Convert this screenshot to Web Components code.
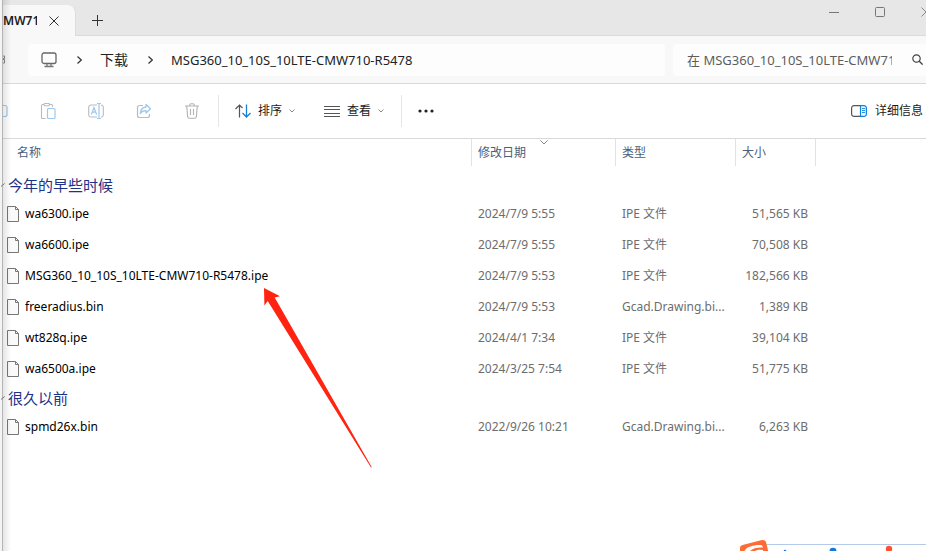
<!DOCTYPE html>
<html lang="zh-CN">
<head>
<meta charset="utf-8">
<title>MSG360_10_10S_10LTE-CMW710-R5478</title>
<style>
  html, body { margin: 0; height: 100%; overflow: hidden; background: #fff; }
  body { font-family: "Noto Sans", "Noto Sans CJK SC", sans-serif; color: #1b1b1b; }
</style>
</head>
<body>
<explorer-window>
  <tab-strip slot="tabs" label="MW71"></tab-strip>
  <address-row slot="address"></address-row>
  <command-bar slot="commands"></command-bar>
  <file-list></file-list>
  <pointer-arrow slot="overlay"></pointer-arrow>
  <ime-bar slot="overlay"></ime-bar>
</explorer-window>

<script>
const RESET = `
  :host, * { box-sizing: border-box; }
  button, input { font: inherit; color: inherit; background: none; border: 0; padding: 0; margin: 0; outline: 0; }
  button { display: flex; align-items: center; justify-content: center; flex: none; white-space: nowrap; }
  svg { display: block; flex: none; overflow: visible; }
`;

class Base extends HTMLElement {
  constructor() {
    super();
    this.attachShadow({ mode: 'open' }).innerHTML =
      `<style>${RESET}${this.constructor.css}</style>${this.constructor.html}`;
  }
}

const ICONS = {
  close: [10, 10, '<path d="M.5.5l9 9M9.500.5l-9 9" stroke="#333"/>'],
  plus: [11, 11, '<path d="M5.500 0v11M0 5.500h11" stroke="#333"/>'],
  min: [10, 10, '<path d="M0 5.500h10" stroke="#777"/>'],
  max: [10, 10, '<rect x=".5" y=".5" width="9" height="9" rx="1" stroke="#777"/>'],
  winclose: [10, 10, '<path d="M.5.5l9 9M9.500.5l-9 9" stroke="#888"/>'],
  pc: [16, 16, '<rect x="1" y="1" width="14" height="10.500" rx="2" stroke="#666" stroke-width="1.300"/><path d="M6 11.500v2.500M10 11.500v2.500M3.500 14.500h9" stroke="#777" stroke-width="1.300"/>'],
  next: [5, 8, '<path d="M.5.5L4.300 4 .5 7.500" stroke="#333" stroke-width="1.200"/>'],
  search: [11, 11, '<circle cx="4.500" cy="4.500" r="3.700" stroke="#444" stroke-width="1.200"/><path d="M7.300 7.300l3.300 3.300" stroke="#444" stroke-width="1.300"/>'],
  refresh: [3, 9, '<path d="M0 1h1.500v2.500H0M0 4.500h1.500V8H0" stroke="#888"/>'],
  copy: [16, 16, '<path d="M2 2.500h10a2 2 0 0 1 2 2v7a2 2 0 0 1-2 2H2" stroke="#9cc9f0" stroke-width="1.200"/>'],
  paste: [16, 16, '<path d="M5.500 15.500h-3a1 1 0 0 1-1-1v-12a1 1 0 0 1 1-1H4M9 1.500h2.500a1 1 0 0 1 1 1V4" stroke="#bbb" stroke-width="1.100"/><rect x="4" y=".5" width="5.500" height="2.200" rx="1" stroke="#bbb" stroke-width="1.100"/><rect x="7.500" y="5.500" width="7.500" height="10" rx="1" stroke="#9cc9f0" stroke-width="1.200"/>'],
  rename: [16, 16, '<path d="M9 2H3a2.300 2.300 0 0 0-2.300 2.300v7.400A2.300 2.300 0 0 0 3 14h6M13 2a2.300 2.300 0 0 1 2.300 2.300v7.400A2.300 2.300 0 0 1 13 14" stroke="#bbb" stroke-width="1.100"/><path d="M3.400 11.500L6 4.500l2.600 7M4.300 9.200h3.400M11 .5v15M9 .5h4M9 15.500h4" stroke="#9cc9f0" stroke-width="1.200"/>'],
  share: [16, 16, '<path d="M7 2.500H3.500a2 2 0 0 0-2 2v8a2 2 0 0 0 2 2h8a2 2 0 0 0 2-2V11" stroke="#bbb" stroke-width="1.200"/><path d="M10 1.500l4.500 4.200L10 10V7.600C7.300 7.500 5.500 8.500 4.300 10.500 4.500 6.500 6.500 4.300 10 4z" stroke="#9cc9f0" stroke-width="1.300" stroke-linejoin="round"/>'],
  trash: [16, 16, '<path d="M1 3h14M5.800 3V2a1.200 1.200 0 0 1 1.200-1.200h2A1.200 1.200 0 0 1 10.200 2v1M2.700 3l1 11a1.500 1.500 0 0 0 1.500 1.300h5.600a1.500 1.500 0 0 0 1.500-1.300l1-11M6.500 6v6M9.500 6v6" stroke="#b3b3b3" stroke-width="1.100"/>'],
  sort: [16, 14, '<path d="M4.500 13.500V1M.5 5l4-4 3 3" stroke="#555" stroke-width="1.200"/><path d="M11.500.5V13M7.500 9l4 4 4-4" stroke="#1480d8" stroke-width="1.300"/>'],
  lines: [16, 11, '<path d="M0 .5h16M0 3.500h16M0 7.500h16M0 10.500h16" stroke="#555"/>'],
  down: [6, 4, '<path d="M.5.5L3 3 5.500.5" stroke="#888"/>'],
  sorted: [8, 5, '<path d="M.5.5L4 4 7.500.5" stroke="#888"/>'],
  dots: [16, 4, '<g fill="#222"><circle cx="2" cy="2" r="1.600"/><circle cx="8" cy="2" r="1.600"/><circle cx="14" cy="2" r="1.600"/></g>'],
  panel: [16, 12, '<path d="M9.500.6H3A2.400 2.400 0 0 0 .6 3v6A2.400 2.400 0 0 0 3 11.400h6.500" stroke="#555" stroke-width="1.200"/><path d="M9.500.6H13A2.400 2.400 0 0 1 15.400 3v6a2.400 2.400 0 0 1-2.400 2.400H9.500z" fill="#eef7fd" stroke="#1480d8" stroke-width="1.200"/><path d="M11 3.500h3M11 5.500h3M11 7.500h3" stroke="#1480d8" stroke-width=".9"/>'],
  file: [12, 16, '<path d="M.5.5h8l3 3v12H.5z" fill="#fafafa" stroke="#777"/><path d="M8.500.5v3h3" stroke="#777"/>'],
  group: [5, 4, '<path d="M0 3.500L3.500.5" stroke="#777"/>'],
};

class UiIcon extends HTMLElement {
  constructor() { super(); this.attachShadow({ mode: 'open' }); }
  connectedCallback() {
    const [w, h, body] = ICONS[this.getAttribute('name')];
    this.shadowRoot.innerHTML = `<style>:host{display:block;flex:none}svg{display:block}</style>
      <svg width="${w}" height="${h}" viewBox="0 0 ${w} ${h}" fill="none" aria-hidden="true">${body}</svg>`;
  }
}
customElements.define('ui-icon', UiIcon);

customElements.define('explorer-window', class extends Base {
  static css = `
    :host { display: flex; position: relative; height: 100%; overflow: hidden; }
    .edge { flex: none; width: 3px; background: #f4f4f4; border-right: 1px solid #b4b4b4; }
    .main { flex: 1; min-width: 0; display: flex; flex-direction: column; position: relative; }
    .shade { position: absolute; inset: 0 auto 0 0; width: 8px; pointer-events: none;
      background: linear-gradient(90deg, rgba(0,0,0,.1), rgba(0,0,0,0)); }
  `;
  static html = `<div class="edge"></div>
    <div class="main"><slot name="tabs"></slot><slot name="address"></slot><slot name="commands"></slot><slot></slot><div class="shade"></div></div>
    <slot name="overlay"></slot>`;
});

customElements.define('tab-strip', class extends Base {
  static css = `
    :host { display: flex; flex: none; height: 36px; background: #e7e7e7; border-bottom: 1px solid #dadada; font-size: 12px; font-weight: 600; }
    .tab { display: flex; align-items: center; width: 73px; margin: 5px 0 -1px; padding-right: 16px;
      justify-content: space-between; background: #f8f8f8; border-radius: 0 8px 0 0; border-right: 1px solid #dcdcdc; }
    .name { width: 34px; overflow: hidden; white-space: nowrap; line-height: 20px; }
    .add { width: 43px; padding-top: 5px; }
    .space { flex: 1; }
    .win { width: 46px; height: 23px; }
    .win:last-child { margin-right: -23px; }
  `;
  static html = `
    <div class="tab"><span class="name"></span><button aria-label="关闭标签页"><ui-icon name="close"></ui-icon></button></div>
    <button class="add" aria-label="新建标签页"><ui-icon name="plus"></ui-icon></button>
    <div class="space"></div>
    <button class="win" aria-label="最小化"><ui-icon name="min"></ui-icon></button>
    <button class="win" aria-label="最大化"><ui-icon name="max"></ui-icon></button>
    <button class="win" aria-label="关闭"><ui-icon name="winclose"></ui-icon></button>`;
  connectedCallback() { this.shadowRoot.querySelector('.name').textContent = this.getAttribute('label'); }
});

customElements.define('address-row', class extends Base {
  static css = `
    :host { display: flex; flex: none; align-items: center; gap: 8px; height: 48px; background: #f8f8f8;
      border-bottom: 1px solid #d9d9d9; font-size: 14px; line-height: 20px; }
    .refresh { width: 17px; justify-content: flex-start; }
    nav { flex: 1; min-width: 0; display: flex; align-items: center; height: 32px; padding-left: 13px; background: #fdfdfd; border-radius: 4px; }
    .sep { width: 5px; margin: 0 18px 0 20px; }
    nav a { color: #222; text-decoration: none; white-space: nowrap; }
    nav a:last-child, input { font-size: 13px; }
    label { flex: none; display: flex; align-items: center; width: 253px; height: 32px; padding-left: 14px; gap: 20px;
      background: #fdfdfd; border-radius: 4px 0 0 4px; }
    input { width: 205px; height: 32px; color: #5d5d5d; }
    input::placeholder { color: #5d5d5d; opacity: 1; }
  `;
  static html = `
    <button class="refresh" aria-label="刷新"><ui-icon name="refresh"></ui-icon></button>
    <nav><ui-icon name="pc"></ui-icon>
      <ui-icon class="sep" name="next"></ui-icon><a href="#downloads">下载</a>
      <ui-icon class="sep" name="next"></ui-icon><a href="#folder">MSG360_10_10S_10LTE-CMW710-R5478</a></nav>
    <label><input type="text" aria-label="搜索" placeholder="在 MSG360_10_10S_10LTE-CMW710"><ui-icon name="search"></ui-icon></label>`;
});

customElements.define('command-bar', class extends Base {
  static css = `
    :host { display: flex; flex: none; align-items: center; height: 55px; background: #fff; border-bottom: 1px solid #d9d9d9;
      font-size: 12px; line-height: 20px; }
    .icon { width: 48px; height: 32px; }
    .first { width: 21px; justify-content: flex-start; overflow: hidden; }
    .first ui-icon { margin-left: -10px; }
    .text { height: 32px; gap: 7px; }
    .view { margin-left: 29px; }
    hr { width: 1px; height: 32px; margin: 0 16px 0 17px; border: 0; background: #e5e5e5; }
    .tight { margin-left: 2px; }
    .space { flex: 1; }
    .details { margin-right: 3px; gap: 8px; }
  `;
  static html = `
    <button class="icon first" aria-label="复制"><ui-icon name="copy"></ui-icon></button>
    <button class="icon" aria-label="粘贴"><ui-icon name="paste"></ui-icon></button>
    <button class="icon" aria-label="重命名"><ui-icon name="rename"></ui-icon></button>
    <button class="icon" aria-label="共享"><ui-icon name="share"></ui-icon></button>
    <button class="icon" aria-label="删除"><ui-icon name="trash"></ui-icon></button>
    <hr class="tight">
    <button class="text"><ui-icon name="sort"></ui-icon><span>排序</span><ui-icon name="down"></ui-icon></button>
    <button class="text view"><ui-icon name="lines"></ui-icon><span>查看</span><ui-icon name="down"></ui-icon></button>
    <hr>
    <button aria-label="更多"><ui-icon name="dots"></ui-icon></button>
    <div class="space"></div>
    <button class="text details"><ui-icon name="panel"></ui-icon><span>详细信息</span></button>`;
});

const GROUPS = [
  ['今年的早些时候', [
    ['wa6300.ipe', '2024/7/9 5:55', 'IPE 文件', '51,565 KB'],
    ['wa6600.ipe', '2024/7/9 5:55', 'IPE 文件', '70,508 KB'],
    ['MSG360_10_10S_10LTE-CMW710-R5478.ipe', '2024/7/9 5:53', 'IPE 文件', '182,566 KB'],
    ['freeradius.bin', '2024/7/9 5:53', 'Gcad.Drawing.bi...', '1,389 KB'],
    ['wt828q.ipe', '2024/4/1 7:34', 'IPE 文件', '39,104 KB'],
    ['wa6500a.ipe', '2024/3/25 7:54', 'IPE 文件', '51,775 KB'],
  ]],
  ['很久以前', [['spmd26x.bin', '2022/9/26 10:21', 'Gcad.Drawing.bi...', '6,263 KB']]],
];

customElements.define('file-list', class extends Base {
  static css = `
    :host { display: block; flex: 1; min-height: 0; padding-right: 110px; background: #fff; font-size: 12px; line-height: 18px; }
    table { width: 100%; table-layout: fixed; border-collapse: separate; border-spacing: 0; }
    .date { width: 144px; } .type { width: 120px; } .size { width: 80px; }
    th, td { padding: 0; text-align: left; font-weight: 400; white-space: nowrap; }
    thead th { height: 27px; border-right: 1px solid #e2e2e2; color: #4c607a; padding-left: 6px; position: relative; }
    thead th:first-child { padding-left: 14px; }
    .mark { position: absolute; top: 1px; left: 50%; margin-left: -4px; }
    .gap td { height: 5px; }
    .group th { height: 27px; }
    .group button { gap: 2px; margin-left: -2px; color: #1e3287; font-size: 15px; line-height: 22px; }
    .file td { height: 31px; padding-left: 6px; color: #6d6d6d; }
    .file td:first-child { padding-left: 4px; color: #000; }
    .file td:last-child { padding: 0 8px 0 0; text-align: right; }
    .name { display: flex; align-items: center; gap: 6px; }
  `;
  static html = `<table>
    <colgroup><col><col class="date"><col class="type"><col class="size"></colgroup>
    <thead><tr><th><button>名称</button></th><th><button>修改日期</button><ui-icon class="mark" name="sorted"></ui-icon></th>
      <th><button>类型</button></th><th><button>大小</button></th></tr></thead>
    <tbody><tr class="gap"><td colspan="4"></td></tr></tbody></table>`;
  connectedCallback() {
    const body = this.shadowRoot.querySelector('tbody');
    for (const [title, files] of GROUPS) {
      body.insertAdjacentHTML('beforeend',
        `<tr class="group"><th colspan="4"><button aria-expanded="true"><ui-icon name="group"></ui-icon><span>${title}</span></button></th></tr>` +
        files.map(([n, d, t, s]) => `<tr class="file"><td><div class="name"><ui-icon name="file"></ui-icon><span>${n}</span></div></td><td>${d}</td><td>${t}</td><td>${s}</td></tr>`).join(''));
    }
  }
});

customElements.define('pointer-arrow', class extends Base {
  static css = `:host { position: absolute; left: 264px; top: 288px; pointer-events: none; }`;
  static html = `<svg width="108" height="180" viewBox="0 0 108 180" aria-hidden="true">
    <path d="M0 0L16 8.300 10.700 9.500 107.800 179.300 107 179.500 3.700 13 .4 17.500z" fill="#ff2412"/></svg>`;
});

customElements.define('ime-bar', class extends Base {
  static css = `:host { position: absolute; right: 0; bottom: 0; pointer-events: none; }`;
  static html = `<svg width="186" height="12" viewBox="0 0 186 12" style="overflow:hidden" aria-hidden="true">
    <path d="M26 5.500h160" stroke="#b5cae6"/>
    <path d="M0 12V8.500Q0 6.500 2.500 6L21 1.200Q25 .3 26 3l2.200 9z" fill="#ff6b35"/>
    <path d="M4.500 12C6 8 14 5.500 22 6.200L23 8.500C18 8 13 9 10 12z" fill="#fff"/>
    <path d="M15 12q3-2 8-1v1z" fill="#fff"/>
    <circle cx="45" cy="12" r="1.300" fill="#1677dd"/><circle cx="93" cy="12.300" r="3.500" fill="#1677dd"/>
    <circle cx="149" cy="10" r="3.200" fill="#ff5030"/></svg>`;
});
</script>
</body>
</html>
